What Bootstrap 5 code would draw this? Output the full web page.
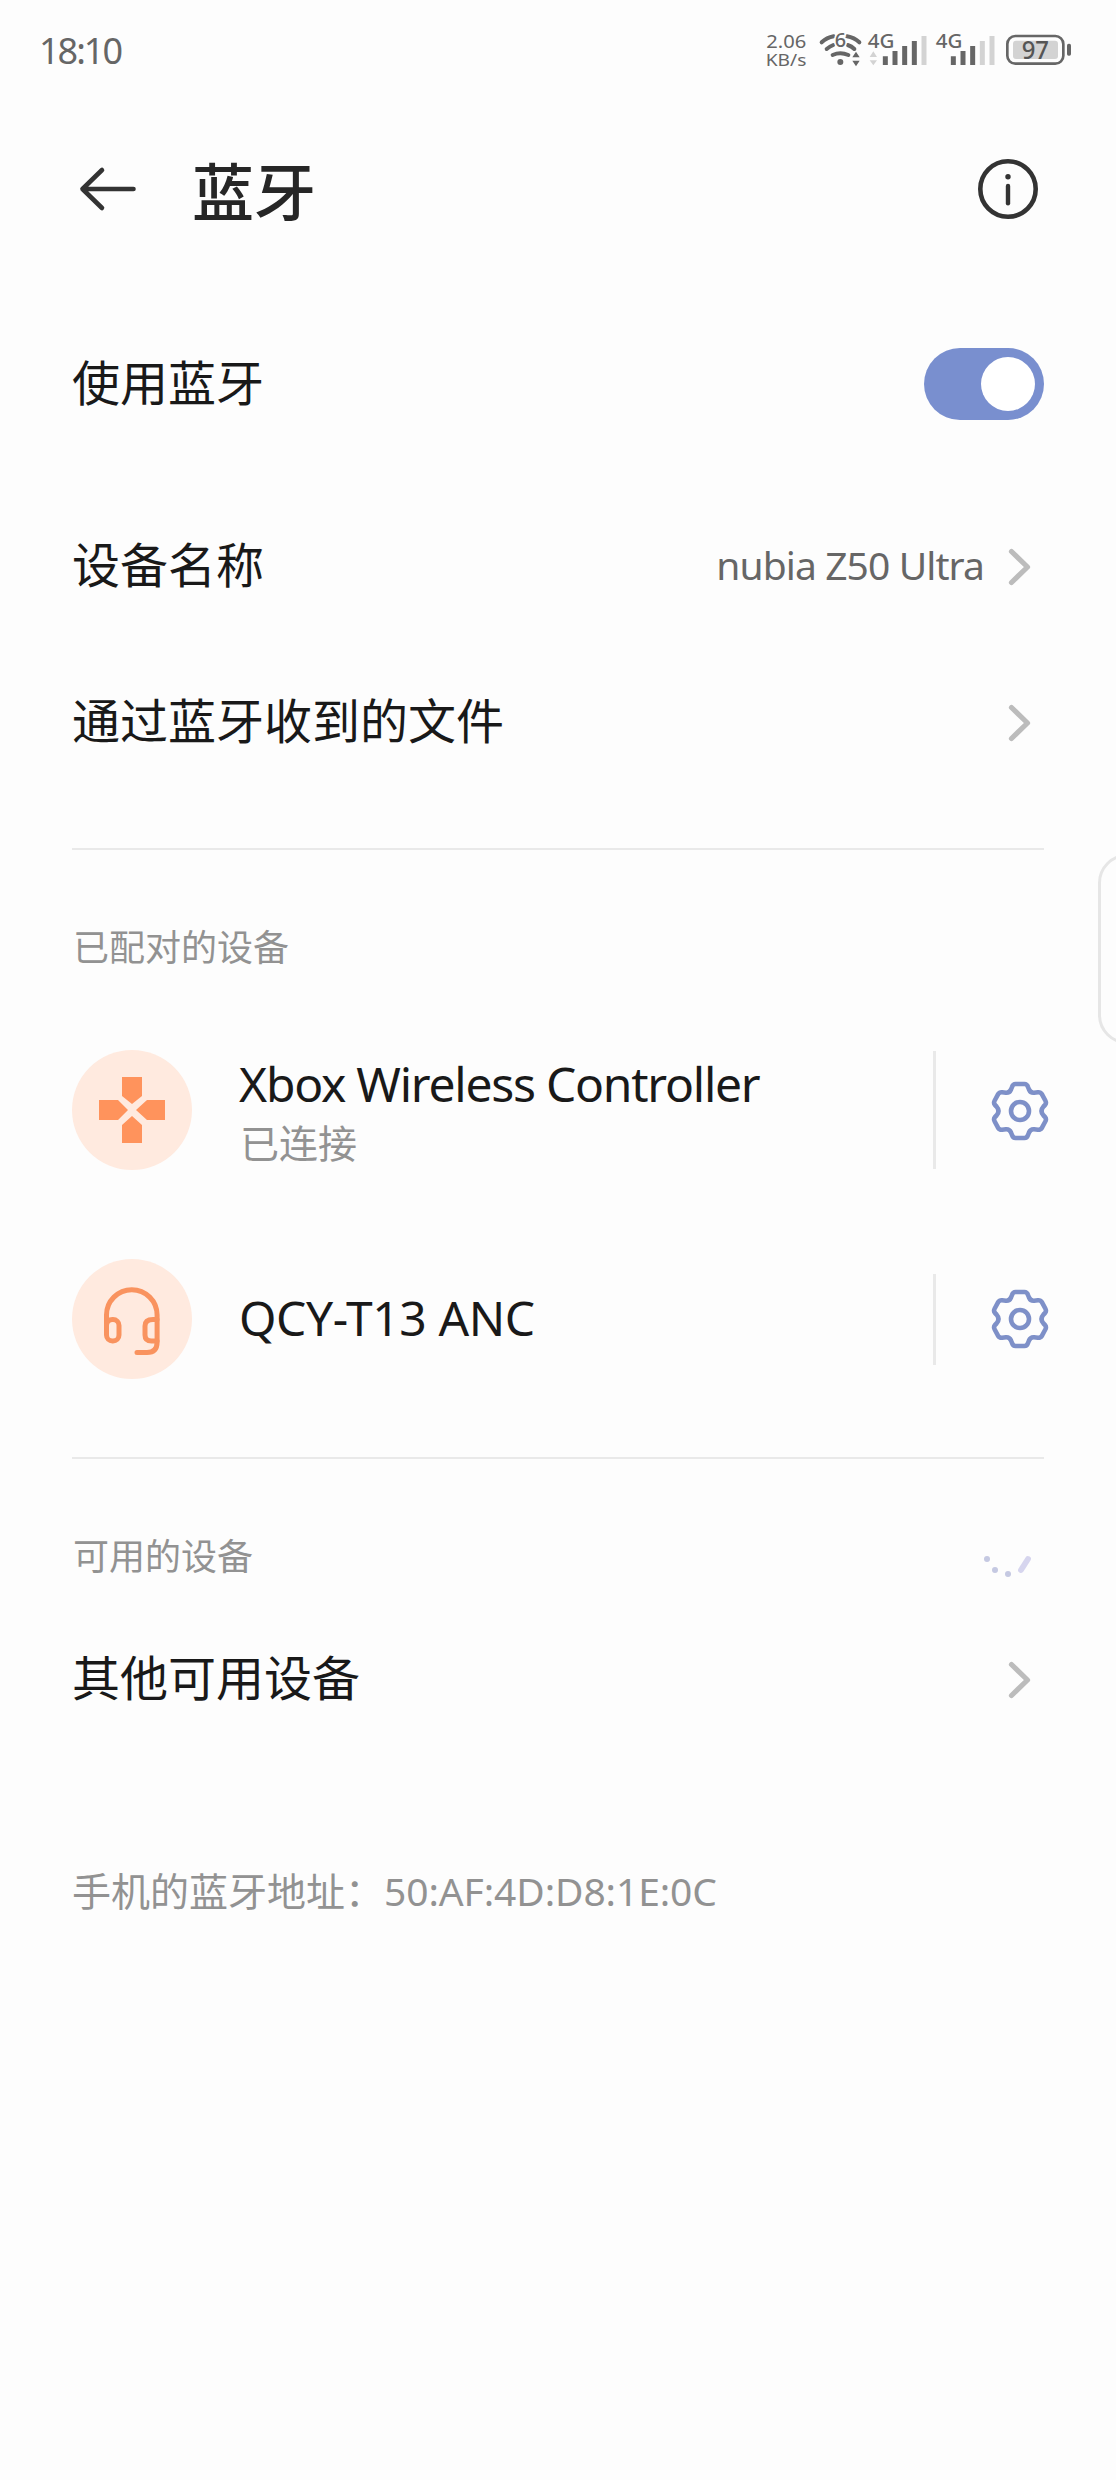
<!DOCTYPE html>
<html lang="zh-CN">
<head>
<meta charset="utf-8">
<meta name="viewport" content="width=device-width, initial-scale=1">
<title>蓝牙</title>
<link href="https://cdn.jsdelivr.net/npm/bootstrap@5.3.0/dist/css/bootstrap.min.css" rel="stylesheet">
<style>
  body { font-family: "Noto Sans", "Noto Sans CJK SC", sans-serif; background: #fdfdfd; color: #191919; line-height: 1; }
  .screen { width: 1116px; min-height: 2480px; }
  svg { display: block; flex: none; }
  .zh { font-family: "Noto Sans CJK SC", sans-serif; }
  .status-bar { height: 102px; padding-left: 39px; color: #666; }
  .clock { font-size: 36px; letter-spacing: -2px; }
  .top-bar { height: 174px; padding: 0 78px; }
  .page-title { font-size: 62px; font-weight: 500; margin-left: 54px; color: #262626; }
  .content { padding: 0 72px; }
  .setting { font-size: 48px; padding-bottom: 8px; }
  .row-switch { height: 216px; }
  .row-name { height: 148px; }
  .row-files { height: 164px; margin-bottom: 44px; }
  .row-other { height: 56px; }
  .value-text { font-size: 39px; color: #666; letter-spacing: -.9px; margin-right: 23px; padding-bottom: 3px; }
  .toggle { width: 120px; height: 72px; padding: 9px; background: #798fcf; }
  .knob { width: 54px; height: 54px; background: #fff; }
  .rule { height: 2px; background: #e9e9e9; }
  .section-title { height: 192px; font-size: 36px; color: #929292; padding-left: 1px; }
  .section-title h2 { font-size: inherit; }
  .device { height: 136px; }
  .device + .device { margin-top: 73px; margin-bottom: 70px; }
  .avatar { width: 120px; height: 120px; background: #ffeadf; margin-right: 47px; }
  .device-name { font-size: 48px; letter-spacing: -1.25px; }
  .device-model { letter-spacing: -.4px; padding-bottom: 3px; }
  .device-state { font-size: 39px; color: #929292; margin-top: 14px; padding-left: 1px; }
  .split { width: 3px; height: 118px; background: #e9e9e9; margin-right: 54px; }
  .split-short { height: 91px; }
  .gear { margin-right: -6px; }
  .address { height: 56px; margin-top: 154px; font-size: 39px; color: #929292; }
  .mac { letter-spacing: -.1px; padding-top: 2px; }
  .edge-handle { top: 854px; right: -40px; width: 58px; height: 190px; border: 3px solid #e6e6e6; border-radius: 30px; }
</style>
</head>
<body>
<div class="screen position-relative overflow-hidden">
  <header>
    <div class="status-bar d-flex align-items-center justify-content-between">
      <span class="clock">18:10</span>
      <svg width="376" height="80" viewBox="0 0 1128 240" font-family="Noto Sans, sans-serif" fill="#666">
        <text x="79" y="111" textLength="120" lengthAdjust="spacingAndGlyphs" font-size="54">2.06</text>
        <text x="77" y="166" textLength="122" lengthAdjust="spacingAndGlyphs" font-size="50">KB/s</text>
        <g fill="none" stroke="#666" stroke-width="12" stroke-linecap="round">
          <path d="M278 132q23-10 47 0M260 114q10-8 20-12M323 102q12 4 20 12M245 94q15-14 36-18M321 76q22 4 37 18"/>
        </g>
        <circle cx="301" cy="153" r="9"/>
        <text x="284" y="108" font-size="60" font-weight="500" textLength="34" lengthAdjust="spacingAndGlyphs" stroke="#fdfdfd" stroke-width="10" paint-order="stroke">6</text>
        <path d="M337 139l11-17 11 17zM337 149l11 17 11-17z"/>
        <path fill="#d3d3d3" d="M389 138l11-17 11 17zM389 148l11 15 11-15z"/>
        <g font-size="60" font-weight="500">
          <text x="383" y="111" textLength="80" lengthAdjust="spacingAndGlyphs">4G</text>
          <text x="587" y="111" textLength="80" lengthAdjust="spacingAndGlyphs">4G</text>
        </g>
        <g stroke-width="15" fill="none">
          <path stroke="#666" d="M436 136v26M465 120v42M494 105v57M523 90v72M640 136v26M669 120v42M698 105v57"/>
          <path stroke="#d3d3d3" d="M552 75v87M727 90v72M756 75v87"/>
        </g>
        <rect x="802" y="75" width="168" height="83" rx="24" fill="#fdfdfd" stroke="#666" stroke-width="8"/>
        <rect x="819" y="89" width="135" height="55" rx="9" fill="#d3d3d3"/>
        <rect x="981" y="98" width="12" height="36" rx="5"/>
        <text x="845" y="145" font-size="78" font-weight="500" fill="#555" textLength="82" lengthAdjust="spacingAndGlyphs">97</text>
      </svg>
    </div>
    <div class="top-bar d-flex align-items-center">
      <svg width="60" height="48" viewBox="0 0 60 48" fill="none" stroke="#333" stroke-width="4.6" stroke-linecap="round" stroke-linejoin="round"><path d="M55.500 24H4.500M24 5L4.500 24 24 43"/></svg>
      <h1 class="page-title zh mb-0">蓝牙</h1>
      <svg class="ms-auto" width="60" height="60" viewBox="0 0 60 60"><circle cx="30" cy="30" r="27.700" fill="none" stroke="#333" stroke-width="4.600"/><circle cx="30" cy="17.800" r="2.700" fill="#333"/><path d="M30 27v17.300" stroke="#333" stroke-width="4.400" stroke-linecap="round"/></svg>
    </div>
  </header>

  <main class="content">
    <div class="row-switch d-flex align-items-center justify-content-between">
      <span class="setting zh">使用蓝牙</span>
      <span class="toggle d-flex justify-content-end rounded-pill" role="switch" aria-checked="true"><span class="knob rounded-circle"></span></span>
    </div>
    <div class="row-name d-flex align-items-center">
      <span class="setting zh me-auto">设备名称</span>
      <span class="value-text">nubia Z50 Ultra</span>
      <svg width="37" height="40" viewBox="0 0 37 40" fill="none" stroke="#bcbcbc" stroke-width="5.200" stroke-linecap="round" stroke-linejoin="round"><path d="M4.500 5.500l16 15.500-16 15.500"/></svg>
    </div>
    <div class="row-files d-flex align-items-center justify-content-between">
      <span class="setting zh">通过蓝牙收到的文件</span>
      <svg width="37" height="40" viewBox="0 0 37 40" fill="none" stroke="#bcbcbc" stroke-width="5.200" stroke-linecap="round" stroke-linejoin="round"><path d="M4.500 5.500l16 15.500-16 15.500"/></svg>
    </div>

    <div class="rule"></div>
    <section>
      <div class="section-title d-flex align-items-center"><h2 class="zh fw-normal mb-0">已配对的设备</h2></div>
      <div class="device d-flex align-items-center">
        <span class="avatar rounded-circle d-flex">
          <svg width="120" height="120" viewBox="0 0 120 120" fill="#ff935c"><path d="M50 27h20v19l-10 8-10-8zM50 93h20V75l-10-9-10 9zM27 50h19l10 10-10 10H27zM93 50H75l-11 10 11 10h18z"/></svg>
        </span>
        <span class="me-auto d-flex flex-column">
          <span class="device-name">Xbox Wireless Controller</span>
          <span class="device-state zh">已连接</span>
        </span>
        <span class="split"></span>
        <svg class="gear" width="60" height="62" viewBox="-30 -32 60 62" fill="none" stroke="#7e90c8" stroke-width="4.600" stroke-linejoin="round"><path id="cog" d="M-4.500-27H4.500Q7-27 8-24L9-21.500Q10.500-18 14-18.300L18-18.800Q20.500-19 22-16.700L25.300-10.500Q26.700-8 25-6L23.500-4.500Q19.500 0 23.500 4.500L25 6Q26.700 8 25.300 10.500L22 16.700Q20.500 19 18 18.800L14 18.300Q10.500 18 9 21.500L8 24Q7 27 4.500 27H-4.500Q-7 27-8 24L-9 21.500Q-10.500 18-14 18.300L-18 18.800Q-20.500 19-22 16.700L-25.300 10.500Q-26.700 8-25 6L-23.500 4.500Q-19.500 0-23.500-4.500L-25-6Q-26.700-8-25.300-10.500L-22-16.700Q-20.500-19-18-18.800L-14-18.300Q-10.500-18-9-21.500L-8-24Q-7-27-4.500-27Z"/><circle r="9"/></svg>
      </div>
      <div class="device d-flex align-items-center">
        <span class="avatar rounded-circle d-flex">
          <svg width="120" height="120" viewBox="0 0 120 120" fill="none" stroke="#f9935f" stroke-width="5" stroke-linecap="round" stroke-linejoin="round"><path d="M34.500 65V56a25.300 25.300 0 0 1 50.600 0V83Q85.100 93.500 75 93.500H65"/><rect x="34.500" y="60.500" width="12.500" height="21.500" rx="6"/><path d="M85 60.500H81Q73 60.500 73 67V76Q73 82 79.500 82H85"/></svg>
        </span>
        <span class="device-name device-model me-auto">QCY-T13 ANC</span>
        <span class="split split-short"></span>
        <svg class="gear" width="60" height="60" viewBox="-30 -30 60 60" fill="none" stroke="#7e90c8" stroke-width="4.600" stroke-linejoin="round"><use href="#cog"/><circle r="9"/></svg>
      </div>
    </section>

    <div class="rule"></div>
    <section>
      <div class="section-title d-flex align-items-center justify-content-between">
        <h2 class="zh fw-normal mb-0">可用的设备</h2>
        <svg width="72" height="72" viewBox="0 0 72 72"><g fill="#c5c9e2"><circle cx="15" cy="40" r="3"/><circle cx="23" cy="51" r="3"/><circle cx="36" cy="55" r="3"/></g><path d="M49 51l7-11" stroke="#d6d5ee" stroke-width="5.800" stroke-linecap="round"/></svg>
      </div>
      <div class="row-other d-flex align-items-center justify-content-between">
        <span class="setting zh">其他可用设备</span>
        <svg width="37" height="40" viewBox="0 0 37 40" fill="none" stroke="#bcbcbc" stroke-width="5.200" stroke-linecap="round" stroke-linejoin="round"><path d="M4.500 5.500l16 15.500-16 15.500"/></svg>
      </div>
    </section>
    <div class="address d-flex align-items-center"><span class="zh">手机的蓝牙地址：</span><span class="mac">50:AF:4D:D8:1E:0C</span></div>
  </main>
  <div class="edge-handle position-absolute"></div>
</div>
<script src="https://cdn.jsdelivr.net/npm/bootstrap@5.3.0/dist/js/bootstrap.bundle.min.js"></script>
</body>
</html>
